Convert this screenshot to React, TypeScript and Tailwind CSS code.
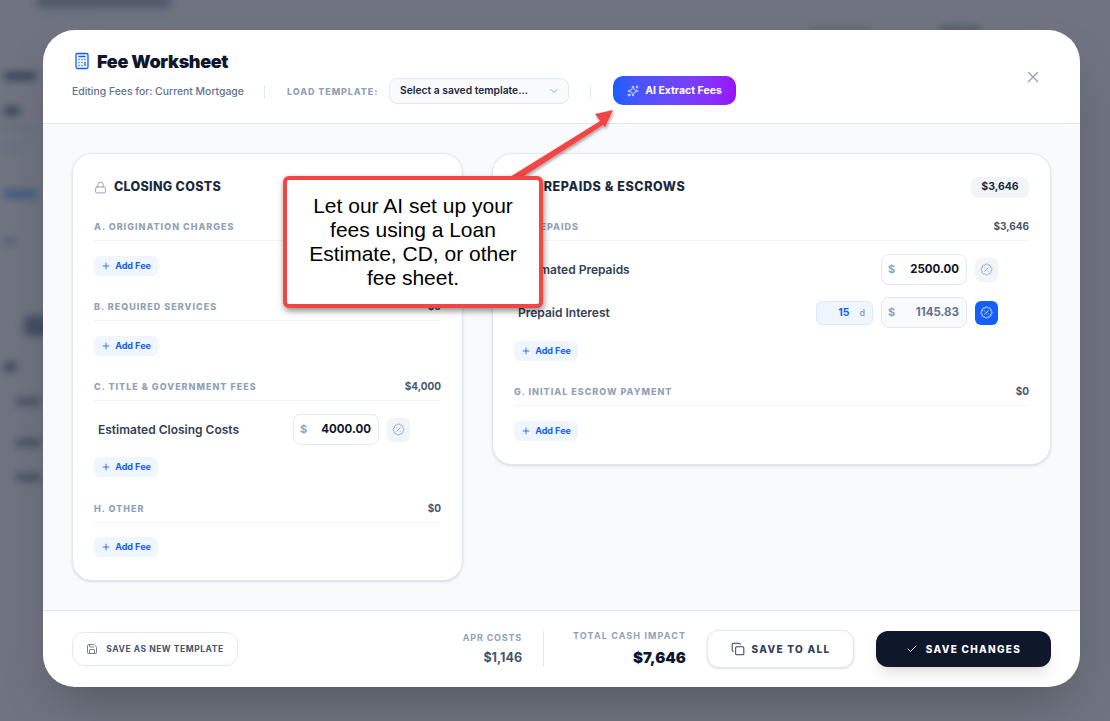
import { BadgePercent, Calculator, Check, ChevronDown, Copy, Lock, Plus, Save, Sparkles, X } from "lucide-react";

function AddFee() {
  return (
    <button className="flex h-[20px] w-[64px] items-center justify-center gap-[4px] rounded-[6px] bg-blue-50 text-[9px] font-bold text-blue-600">
      <Plus className="h-[10px] w-[10px]" strokeWidth={2} />
      Add Fee
    </button>
  );
}

function SectionHead({ label, amount }: { label: string; amount?: string }) {
  return (
    <div className="flex h-[29px] items-start justify-between border-b border-slate-100 pt-[8px]">
      <span className="text-[9px] leading-[13px] font-extrabold tracking-[1px] text-slate-400">{label}</span>
      {amount && <span className="text-[10px] leading-[13px] font-bold text-slate-600">{amount}</span>}
    </div>
  );
}

function MoneyInput({ value, muted }: { value: string; muted?: boolean }) {
  return (
    <div className={`flex h-[31px] w-[86px] items-center justify-between rounded-[8px] border border-slate-200 pr-[7px] pl-[6px] ${muted ? "bg-slate-50" : "bg-white"}`}>
      <span className="text-[11px] font-bold text-slate-400">$</span>
      <span className={`text-[11.5px] font-bold ${muted ? "text-slate-500" : "text-slate-900"}`}>{value}</span>
    </div>
  );
}

function PercentToggle({ on }: { on?: boolean }) {
  return (
    <div className={`flex h-[24px] w-[23px] items-center justify-center rounded-[6px] ${on ? "bg-blue-600 text-white" : "bg-slate-100 text-slate-400"}`}>
      <BadgePercent className="h-[13px] w-[13px]" strokeWidth={1.75} />
    </div>
  );
}

function Backdrop() {
  return (
    <div className="flex h-[721px] w-[1110px] flex-col bg-white pl-[4px] blur-[4px]">
      <div className="ml-[32px] h-[4px] w-[135px] bg-slate-600" />
      <div className="mt-[6px] ml-[36px] h-[3px] w-[130px] bg-blue-200" />
      <div className="mt-[14px] flex h-[5px] justify-end gap-[70px] pr-[130px]">
        <div className="w-[60px] bg-slate-300" />
        <div className="w-[40px] bg-slate-400" />
      </div>
      <div className="mt-[41px] h-[6px] w-[32px] bg-slate-600" />
      <div className="mt-[29px] h-[6px] w-[16px] bg-slate-600" />
      <div className="mt-[12px] h-[5px] w-[30px] bg-slate-200" />
      <div className="mt-[14px] h-[5px] w-[20px] bg-slate-200" />
      <div className="mt-[41px] h-[6px] w-[32px] bg-blue-400" />
      <div className="mt-[42px] h-[5px] w-[10px] bg-slate-400" />
      <div className="mt-[72px] ml-[20px] h-[20px] w-[24px] rounded bg-slate-400" />
      <div className="mt-[28px] h-[6px] w-[12px] bg-slate-600" />
      <div className="mt-[29px] ml-[12px] h-[5px] w-[24px] bg-slate-500" />
      <div className="mt-[36px] ml-[12px] h-[5px] w-[24px] bg-slate-500" />
      <div className="mt-[30px] ml-[12px] h-[5px] w-[24px] bg-slate-500" />
    </div>
  );
}

export default function App() {
  return (
    <div className="relative h-[721px] w-[1110px] overflow-hidden font-['Inter',sans-serif] text-slate-900">
      <Backdrop />
      <div className="absolute inset-0 bg-slate-900/60" />

      <div className="absolute top-[30px] left-[43px] flex h-[657px] w-[1037px] flex-col overflow-hidden rounded-[32px] bg-white shadow-2xl">
        {/* header */}
        <div className="flex h-[94px] items-start justify-between border-b border-slate-200 pt-[20px] pr-[38px] pl-[29px]">
          <div>
            <div className="flex h-[22px] items-center gap-[6px] pl-[1px]">
              <Calculator className="h-[18px] w-[18px] fill-blue-50 text-blue-600" strokeWidth={1.75} />
              <h1 className="text-[18px] font-black tracking-[-0.35px] text-slate-900">Fee Worksheet</h1>
            </div>
            <div className="mt-[5px] flex h-[29px] items-center">
              <span className="w-[171px] text-[10.4px] font-medium whitespace-nowrap text-slate-500">Editing Fees for: Current Mortgage</span>
              <div className="mr-[22px] ml-[21px] h-[14px] w-px bg-slate-200" />
              <span className="w-[91px] text-[9px] font-extrabold tracking-[0.9px] whitespace-nowrap text-slate-400">LOAD TEMPLATE:</span>
              <div className="ml-[11px] -mt-[1px] flex h-[26px] w-[180px] items-center justify-between rounded-[8px] border border-slate-200 bg-slate-50 pr-[8px] pl-[10px] text-[10.3px] font-semibold text-slate-800">
                Select a saved template...
                <ChevronDown className="h-[12px] w-[12px] text-slate-400" />
              </div>
              <div className="mr-[22px] ml-[21px] h-[14px] w-px bg-slate-200" />
              <button className="-mt-[2px] flex h-[29px] w-[123px] items-center justify-center gap-[6px] rounded-[10px] bg-gradient-to-r from-blue-600 to-purple-600 text-[10.5px] font-bold text-white">
                <Sparkles className="h-[12px] w-[12px]" strokeWidth={1.5} />
                AI Extract Fees
              </button>
            </div>
          </div>
          <X className="mt-[18px] h-[18px] w-[18px] text-slate-400" strokeWidth={1.75} />
        </div>

        {/* body */}
        <div className="flex flex-1 items-start gap-[29px] bg-slate-50 pt-[29px] pr-[29px] pl-[29px]">
          <section className="h-[428px] w-[391px] rounded-[20px] border border-slate-200 bg-white px-[21px] pt-[22px] shadow-sm">
            <div className="flex h-[22px] items-center gap-[7px]">
              <Lock className="h-[13px] w-[13px] text-slate-400" strokeWidth={1.75} />
              <h2 className="text-[12.5px] font-extrabold tracking-[0.3px] text-slate-800">CLOSING COSTS</h2>
            </div>
            <div className="mt-[14px]">
              <SectionHead label="A. ORIGINATION CHARGES" />
              <div className="mt-[15px]"><AddFee /></div>
            </div>
            <div className="mt-[16px]">
              <SectionHead label="B. REQUIRED SERVICES" amount="$0" />
              <div className="mt-[15px]"><AddFee /></div>
            </div>
            <div className="mt-[16px]">
              <SectionHead label="C. TITLE & GOVERNMENT FEES" amount="$4,000" />
              <div className="mt-[13px] flex items-center">
                <span className="w-[199px] pl-[4px] text-[12px] font-semibold text-slate-700">Estimated Closing Costs</span>
                <MoneyInput value="4000.00" />
                <div className="ml-[8px]"><PercentToggle /></div>
              </div>
              <div className="mt-[12px]"><AddFee /></div>
            </div>
            <div className="mt-[17px]">
              <SectionHead label="H. OTHER" amount="$0" />
              <div className="mt-[14px]"><AddFee /></div>
            </div>
          </section>

          <section className="h-[312px] flex-1 rounded-[20px] border border-slate-200 bg-white px-[21px] pt-[22px] shadow-sm">
            <div className="flex h-[22px] items-center justify-between">
              <div className="flex items-center gap-[8px]">
                <Lock className="h-[13px] w-[13px] text-slate-400" strokeWidth={1.75} />
                <h2 className="text-[12.5px] font-extrabold tracking-[0.6px] text-slate-800">PREPAIDS &amp; ESCROWS</h2>
              </div>
              <span className="flex h-[21px] w-[58px] items-center justify-center rounded-[7px] bg-slate-100 text-[10.5px] font-bold text-slate-800">$3,646</span>
            </div>
            <div className="mt-[14px]">
              <SectionHead label="F. PREPAIDS" amount="$3,646" />
              <div className="mt-[13px] flex flex-col gap-[12px] pr-[31px]">
                <div className="flex items-center">
                  <span className="flex-1 pl-[4px] text-[12px] font-semibold text-slate-700">Estimated Prepaids</span>
                  <MoneyInput value="2500.00" />
                  <div className="ml-[8px]"><PercentToggle /></div>
                </div>
                <div className="flex items-center">
                  <span className="flex-1 pl-[4px] text-[12px] font-semibold text-slate-700">Prepaid Interest</span>
                  <div className="mr-[8px] flex h-[24px] w-[57px] items-center justify-end gap-[10px] rounded-[6px] border border-blue-100 bg-blue-50 pr-[7px]">
                    <span className="text-[10.5px] font-bold text-blue-600">15</span>
                    <span className="text-[9px] font-semibold text-slate-400">d</span>
                  </div>
                  <MoneyInput value="1145.83" muted />
                  <div className="ml-[8px]"><PercentToggle on /></div>
                </div>
              </div>
              <div className="mt-[13px]"><AddFee /></div>
            </div>
            <div className="mt-[16px]">
              <SectionHead label="G. INITIAL ESCROW PAYMENT" amount="$0" />
              <div className="mt-[15px]"><AddFee /></div>
            </div>
          </section>
        </div>

        {/* footer */}
        <div className="flex h-[77px] items-center border-t border-slate-200 pr-[29px] pl-[29px]">
          <button className="flex h-[34px] w-[166px] items-center justify-center gap-[8px] rounded-[12px] border border-slate-200 bg-white text-[8.5px] font-bold tracking-[0.55px] text-slate-600">
            <Save className="h-[12px] w-[12px] text-slate-500" strokeWidth={1.75} />
            SAVE AS NEW TEMPLATE
          </button>
          <div className="flex-1" />
          <div className="flex flex-col items-end gap-[6px]">
            <span className="text-[9px] leading-[12px] font-bold tracking-[0.8px] text-slate-400">APR COSTS</span>
            <span className="text-[12.5px] leading-[16px] font-bold text-slate-600">$1,146</span>
          </div>
          <div className="mr-[29px] ml-[21px] h-[36px] w-px bg-slate-200" />
          <div className="-mt-[1px] flex flex-col items-end gap-[7px]">
            <span className="text-[9px] leading-[12px] font-bold tracking-[1.1px] text-slate-400">TOTAL CASH IMPACT</span>
            <span className="text-[15px] leading-[18px] font-black text-slate-900">$7,646</span>
          </div>
          <button className="ml-[21px] flex h-[38px] w-[147px] items-center justify-center gap-[7px] rounded-[12px] border border-slate-200 bg-white text-[10px] font-extrabold tracking-[1.3px] text-slate-700 shadow-sm">
            <Copy className="h-[14px] w-[14px]" strokeWidth={1.75} />
            SAVE TO ALL
          </button>
          <button className="ml-[22px] flex h-[36px] w-[175px] items-center justify-center gap-[8px] rounded-[12px] bg-slate-900 text-[10px] font-extrabold tracking-[1.3px] text-white shadow-lg">
            <Check className="h-[12px] w-[12px]" strokeWidth={1.75} />
            SAVE CHANGES
          </button>
        </div>
      </div>

      {/* annotation */}
      <svg className="absolute top-[100px] left-[500px] h-[90px] w-[125px]" viewBox="0 0 125 90">
        <defs>
          <filter id="arrowShadow" x="-20%" y="-20%" width="140%" height="140%">
            <feDropShadow dx="1" dy="2" stdDeviation="1.5" floodColor="#000" floodOpacity="0.35" />
          </filter>
        </defs>
        <path d="M5 80 L100 21 L95 14 L113 10 L105 27 L103 25 L10 85 Z" fill="#f44545" filter="url(#arrowShadow)" />
      </svg>
      <div className="absolute top-[176px] left-[283px] flex h-[132px] w-[260px] items-center justify-center rounded-[6px] border-4 border-[#f44545] bg-white px-[10px] pb-[1px] text-center font-['Liberation_Sans',sans-serif] text-[21px] leading-[24px] text-black shadow-[1px_3px_6px_rgba(0,0,0,0.45)]">
        Let our AI set up your fees using a Loan Estimate, CD, or other fee sheet.
      </div>
    </div>
  );
}
